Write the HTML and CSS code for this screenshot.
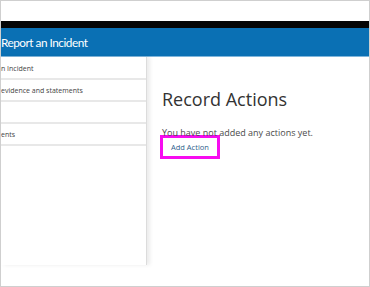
FILE: index.html
```html
<!DOCTYPE html>
<html lang="en">
<head>
  <meta charset="UTF-8" />
  <title>Record Actions</title>
  <link rel="stylesheet" href="styles.css">
</head>
<body>
  <div class="frame">
    <div class="top-space"></div>
    <div class="black-bar"></div>
    <div class="title-bar">
      <span class="title">Report an Incident</span>
    </div>

    <div class="main">
      <div class="sidebar">
        <div class="step">n Incident</div>
        <div class="step">evidence and statements</div>
        <div class="step"></div>
        <div class="step">ents</div>
      </div>

      <div class="content">
        <h1>Record Actions</h1>
        <p>You have not added any actions yet.</p>
        <div class="highlight">
          <a href="#" class="add-btn">Add Action</a>
        </div>
      </div>
    </div>
  </div>
</body>
</html>
```

FILE: styles.css
```css
* {
  box-sizing: border-box;
  margin: 0;
  padding: 0;
}

body {
  font-family: 'Open Sans', sans-serif;
  background: #fff;
  width: 370px;
  height: 287px;
  overflow: hidden;
}

.frame {
  width: 370px;
  height: 287px;
  border: 1px solid #cfcfcf;
  overflow: hidden;
}

.top-space {
  height: 20px;
}

.black-bar {
  height: 7px;
  background: #050505;
}

.title-bar {
  height: 29px;
  background: #0a70b4;
  border-bottom: 1px solid #7fb6dc;
  display: flex;
  align-items: center;
}

.title {
  font-family: 'Lato', sans-serif;
  color: #fff;
  font-size: 11.8px;
  letter-spacing: -0.5px;
  padding-top: 1px;
}

.main {
  display: flex;
  height: 208px;
}

.sidebar {
  width: 146px;
  padding-top: 1px;
  border-right: 1px solid #dcdcdc;
  box-shadow: 3px 0 4px rgba(0, 0, 0, 0.08);
}

.sidebar .step {
  height: 22px;
  border-bottom: 2px solid #e8e8e8;
  font-size: 7px;
  color: #444;
  display: flex;
  align-items: center;
  white-space: nowrap;
}

.content {
  flex: 1;
  padding: 31px 0 0 15px;
}

.content h1 {
  font-size: 18px;
  font-weight: 400;
  line-height: 22px;
  color: #333;
}

.content p {
  margin-top: 17px;
  font-size: 9px;
  line-height: 11px;
  color: #4a4a4a;
}

.highlight {
  width: fit-content;
  border: 3px solid #f70cf0;
  margin: -3px 0 0 -2px;
  padding: 4px 8px 3px 8px;
}

.add-btn {
  display: block;
  font-size: 7.5px;
  line-height: 11px;
  color: #2c5d8c;
  text-decoration: none;
}
```
